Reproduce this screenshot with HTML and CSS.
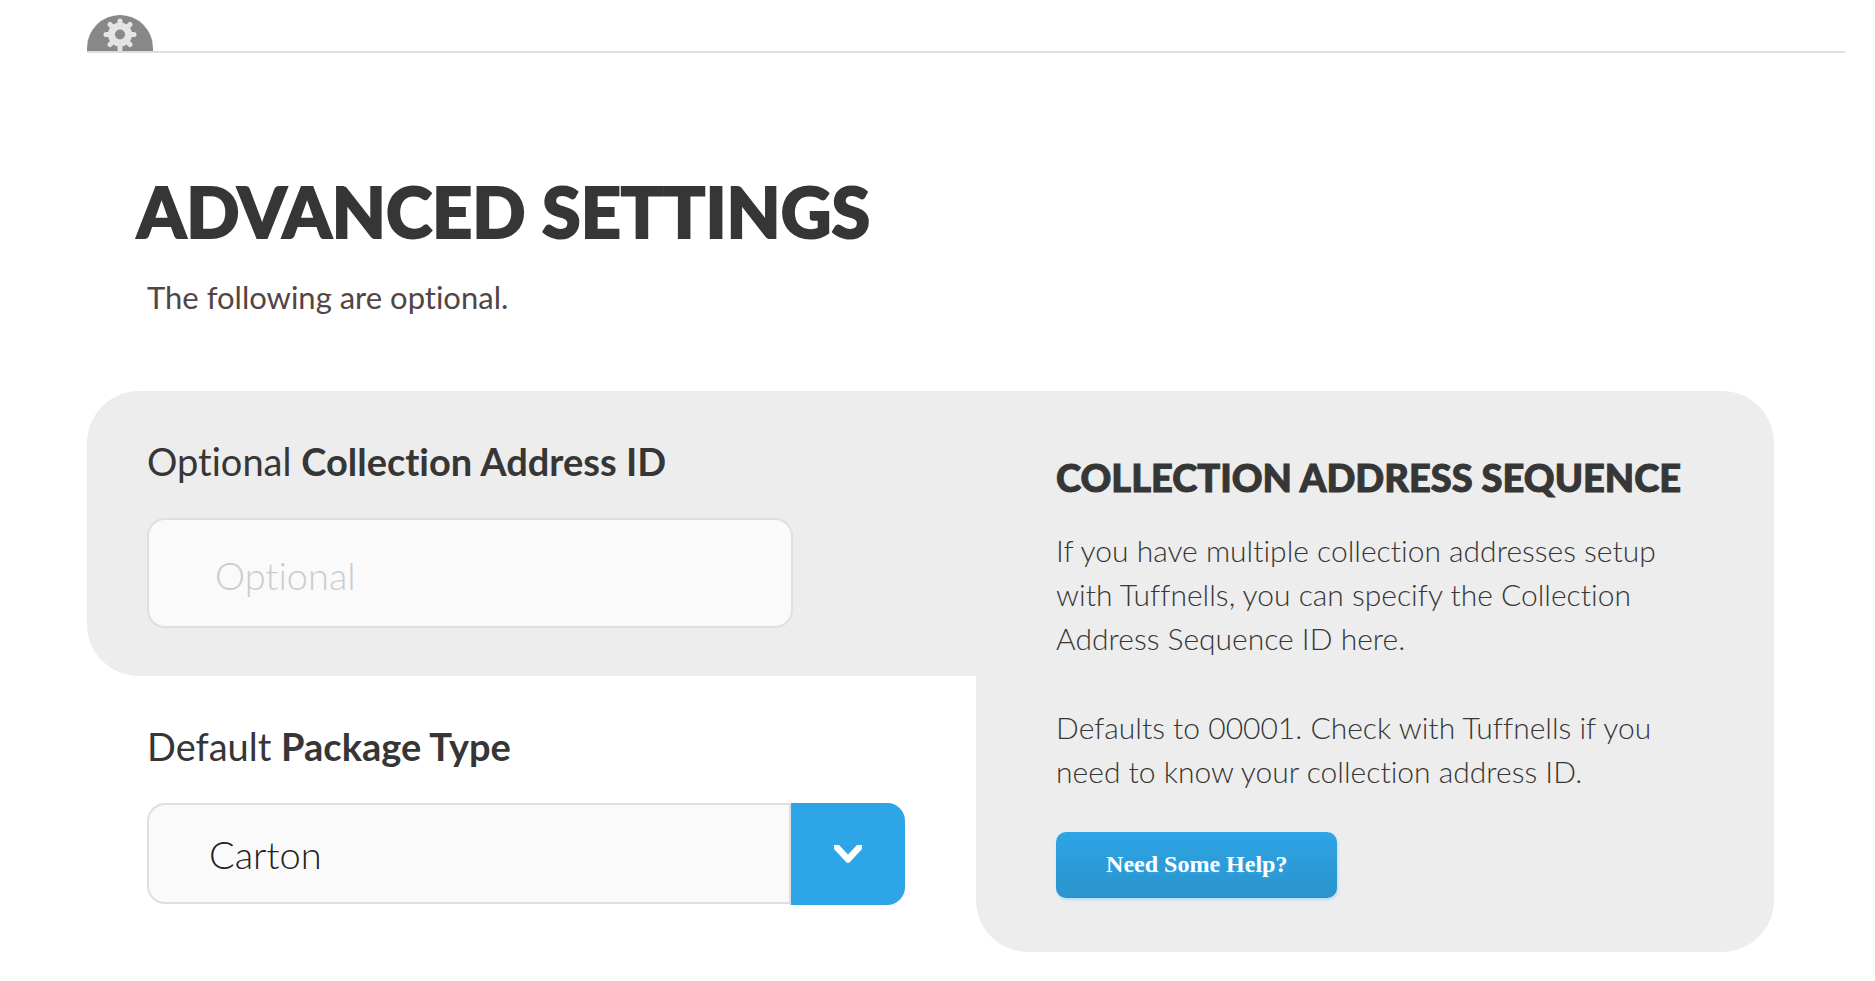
FILE: index.html
```html
<!DOCTYPE html>
<html lang="en">
<head>
    <meta charset="UTF-8">
    <meta name="viewport" content="width=device-width, initial-scale=1.0">
    <title>Advanced Settings</title>
    <link rel="stylesheet" href="styles.css">
</head>
<body>
    <nav class="tabs">
        <a class="tab" href="#advanced" aria-label="Advanced settings">
            <svg width="66" height="36" viewBox="0 0 66 36">
                <path d="M0 36V33A33 33 0 0 1 66 33V36Z" fill="#888"/>
                <g stroke="#e4e4e4" stroke-width="5" stroke-linecap="round">
                    <path d="M33 6V34M19 19.500H47M23 9.500L43 29.500M43 9.500L23 29.500"/>
                </g>
                <circle cx="33" cy="19.500" r="12" fill="#e4e4e4"/>
                <circle cx="33" cy="19.500" r="5" fill="#888"/>
            </svg>
        </a>
    </nav>

    <main class="settings" id="advanced">
        <h1>ADVANCED SETTINGS</h1>
        <p class="intro">The following are optional.</p>

        <form class="columns">
            <div class="fields">
                <div class="field active">
                    <label for="address-id">Optional <strong>Collection Address ID</strong></label>
                    <input id="address-id" type="text" placeholder="Optional">
                </div>
                <div class="field">
                    <label for="package-type">Default <strong>Package Type</strong></label>
                    <div class="dropdown">
                        <select id="package-type">
                            <option>Carton</option>
                        </select>
                        <span class="arrow">
                            <svg width="28" height="18" viewBox="0 0 28 18">
                                <path d="M0 0H5L14 9.500L23 0H28V4L16 17Q14 19 12 17L0 4Z" fill="#fff"/>
                            </svg>
                        </span>
                    </div>
                </div>
            </div>

            <aside class="help">
                <h2>COLLECTION ADDRESS SEQUENCE</h2>
                <p>If you have multiple collection addresses setup<br>with Tuffnells, you can specify the Collection<br>Address Sequence ID here.</p>
                <p>Defaults to 00001. Check with Tuffnells if you<br>need to know your collection address ID.</p>
                <button type="button">Need Some Help?</button>
            </aside>
        </form>
    </main>
</body>
</html>
```

FILE: styles.css
```css
* {
    box-sizing: border-box;
}
body {
    margin: 0;
    background-color: #fff;
    color: #363636;
    font-family: Lato, "Liberation Sans", sans-serif;
    font-variant-ligatures: none;
}
.tabs {
    display: flex;
    margin: 0 30px 0 87px;
    padding-top: 15px;
    border-bottom: 2px solid #dedede;
}
.tab {
    display: flex;
}
.settings {
    padding: 118px 101px 30px 87px;
}
h1,
h2 {
    font-weight: 900;
    -webkit-text-stroke: 1px #363636;
}
h1 {
    margin: 0 0 0 50px;
    font-size: 70px;
    line-height: 80px;
    -webkit-text-stroke-width: 2px;
}
.intro {
    margin: 26px 0 0 60px;
    color: #534545;
    font-size: 31px;
    line-height: 40px;
}
.columns {
    display: grid;
    grid-template-columns: 39fr 35fr;
    margin-top: 74px;
}
.field {
    padding: 46px 71px 48px 60px;
}
.field.active {
    background-color: #ededed;
    border-radius: 52px 0 0 52px;
}
.field label {
    display: block;
    margin-bottom: 33px;
    font-size: 38px;
    line-height: 48px;
}
.field input {
    display: block;
    width: calc(100% - 112px);
    height: 110px;
    padding: 4px 66px 0;
    border: 2px solid #dfdfdf;
    border-radius: 18px;
    background-color: #fafafa;
    font-family: inherit;
    font-size: 38px;
    font-weight: 300;
    font-variant-ligatures: none;
}
.field input::placeholder {
    color: #ccc;
}
.dropdown {
    position: relative;
}
.dropdown select {
    display: block;
    width: 100%;
    height: 101px;
    padding: 0 176px 0 60px;
    border: 2px solid #dfdfdf;
    border-radius: 18px;
    background-color: #fafafa;
    color: #222;
    font-family: inherit;
    font-size: 38px;
    font-weight: 300;
    appearance: none;
}
.arrow {
    position: absolute;
    top: 0;
    right: 0;
    width: 114px;
    height: 102px;
    display: flex;
    align-items: center;
    justify-content: center;
    background-color: #2ea5e6;
    border-radius: 0 18px 18px 0;
    box-shadow: -2px 0 0 #dfdfdf;
    pointer-events: none;
}
.help {
    padding: 64px 60px 52px 80px;
    background-color: #ededed;
    border-radius: 0 52px 52px 52px;
}
.help h2 {
    margin: 0 0 29px;
    font-size: 38px;
    line-height: 44px;
    white-space: nowrap;
}
.help p {
    margin: 0 0 45px;
    font-size: 30px;
    line-height: 44px;
    font-weight: 300;
    white-space: nowrap;
}
.help p:last-of-type {
    margin-bottom: 39px;
}
.help button {
    display: block;
    height: 66px;
    padding: 0 50px 2px;
    border: 0;
    border-radius: 10px;
    background-image: linear-gradient(#2ea5e6, #2a93cb);
    box-shadow: 1px 2px 3px #b5ddf5;
    color: #fff;
    font-family: "Liberation Serif", serif;
    font-size: 24px;
    font-weight: bold;
    text-shadow: 1px 2px 2px #2ea5e6;
}
```
